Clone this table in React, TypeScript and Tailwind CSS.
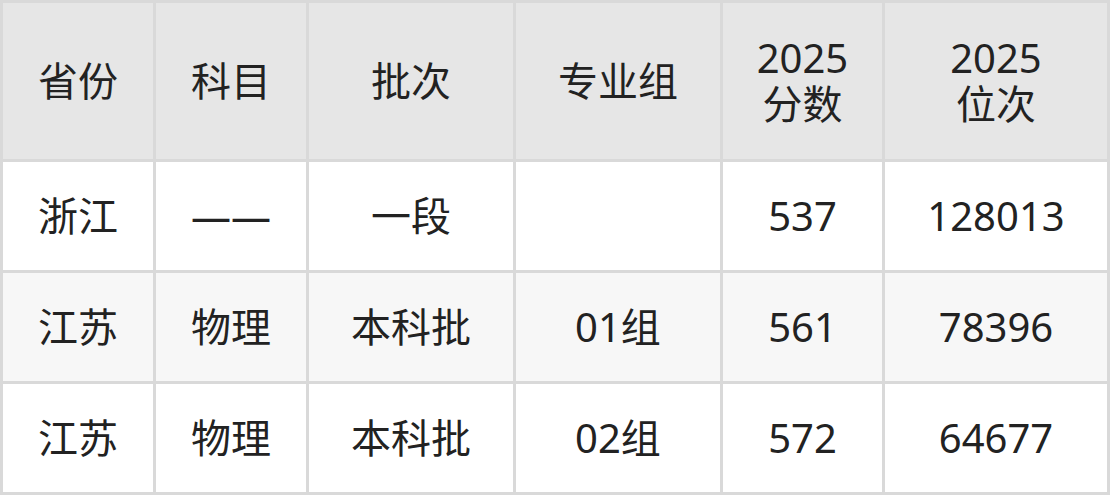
const header = ["省份", "科目", "批次", "专业组", "2025\n分数", "2025\n位次"];

const rows = [
  { bg: "bg-white", cells: ["浙江", "——", "一段", "", "537", "128013"] },
  { bg: "bg-[#f7f7f7]", cells: ["江苏", "物理", "本科批", "01组", "561", "78396"] },
  { bg: "bg-white", cells: ["江苏", "物理", "本科批", "02组", "572", "64677"] },
];

export default function App() {
  return (
    <div
      className="w-[1110px] h-[495px] bg-[#d9d9d9] p-[3px] grid grid-cols-[150px_150px_204px_204px_159px_222px] grid-rows-[156px_108px_108px_108px] gap-[3px] text-[40px] leading-[46px] text-[#222222]"
      style={{ fontFamily: '"Noto Sans", "Noto Sans CJK SC", sans-serif' }}
    >
      {header.map((h, i) => (
        <div key={i} className="bg-[#e6e6e6] flex items-center justify-center text-center whitespace-pre-line">
          {h}
        </div>
      ))}
      {rows.map((r, ri) =>
        r.cells.map((c, ci) => (
          <div key={`${ri}-${ci}`} className={`${r.bg} flex items-center justify-center text-center`}>
            {c}
          </div>
        ))
      )}
    </div>
  );
}
